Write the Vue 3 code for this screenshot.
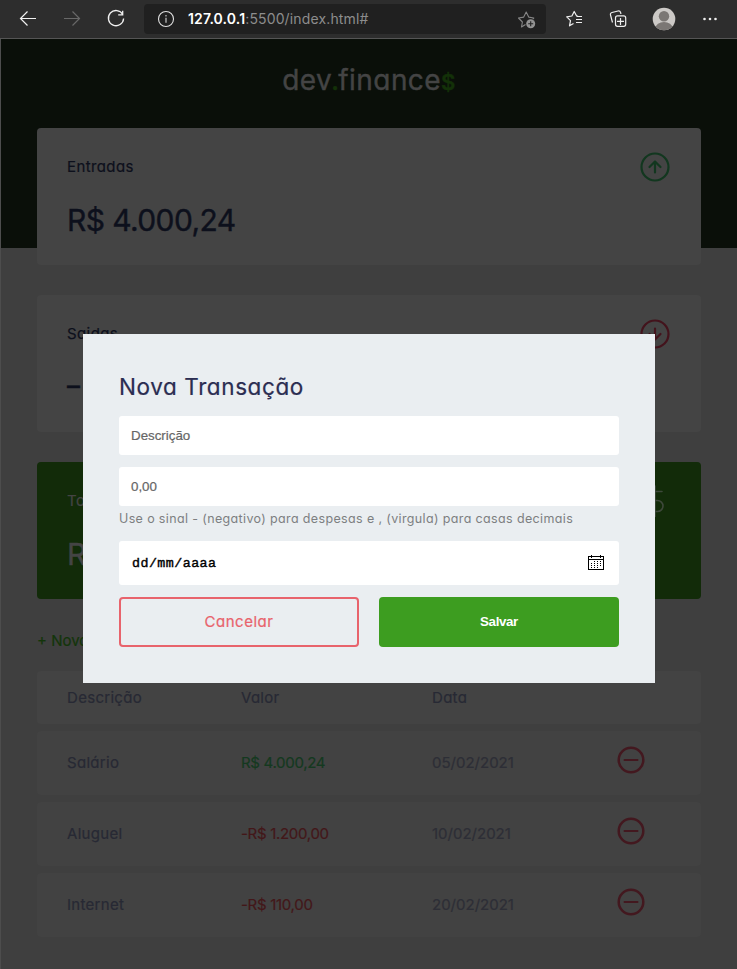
<script setup>
const rows = [
  { name: 'Salário', value: 'R$ 4.000,24', date: '05/02/2021', kind: 'income' },
  { name: 'Aluguel', value: '-R$ 1.200,00', date: '10/02/2021', kind: 'expense' },
  { name: 'Internet', value: '-R$ 110,00', date: '20/02/2021', kind: 'expense' },
]
</script>

<template>
  <div class="window">
    <nav class="toolbar">
      <svg class="nav-icons" width="144" height="38" viewBox="0 0 144 38" fill="none">
        <path d="M36 18.5H20.5M27.5 11.5l-7 7 7 7" stroke="#f0f0f0" stroke-width="1.2" />
        <path d="M64 18.5h15.5M72.500 11.500l7 7-7 7" stroke="#686868" stroke-width="1.200" />
        <path d="M122.700 14.500A7.600 7.600 0 1 0 123.600 18.500M122.700 10.800v4h-4.500" stroke="#f0f0f0" stroke-width="1.300" />
      </svg>
      <div class="address">
        <svg width="18" height="18" viewBox="0 0 18 18" fill="none">
          <circle cx="9" cy="9" r="7.500" stroke="#e0e0e0" stroke-width="1.100" />
          <path d="M9 7.800v5M9 5v1.500" stroke="#b0b0b0" stroke-width="1.400" />
        </svg>
        <span class="url"><b>127.0.0.1</b><span>:5500/index.html#</span></span>
        <svg class="fav" width="20" height="20" viewBox="0 0 20 20" fill="none">
          <path d="M8.500 15.500l-4 2.500.9-5L1.500 9l5.200-.9L9.200 3l2.500 5.100 5.100.9-1 1" stroke="#858585" stroke-width="1.100" stroke-linejoin="round" />
          <circle cx="13.700" cy="14.700" r="4.500" fill="#929292" />
          <path d="M13.700 12.200v5M11.200 14.700h5" stroke="#222" stroke-width="1.100" />
        </svg>
      </div>
      <svg class="tools" width="191" height="38" viewBox="546 0 191 38" fill="none">
        <path d="M578 16.300l-1.500-.5-2.300-4.300-2.300 4.500-5.200.9 3.800 3.700-1 5.200 4-2.300M576.500 16.500h5.500M576 19.500h6M576 22.500h6" stroke="#eee" stroke-width="1.200" stroke-linejoin="round" />
        <path d="M612.500 22.500l-2-7.500q-.5-2 1.500-2.500l6-1.500q2-.4 2.600 1.500l.3 1.500" stroke="#eee" stroke-width="1.200" />
        <rect x="615.500" y="15.900" width="10.200" height="10.400" rx="2" stroke="#eee" stroke-width="1.200" />
        <path d="M620.500 17.900v7M617 21.400h7" stroke="#eee" stroke-width="1.200" />
        <clipPath id="avatar"><circle cx="664" cy="19" r="11.300" /></clipPath>
        <g clip-path="url(#avatar)">
          <path d="M652 7h24v24h-24z" fill="#ccc9c6" />
          <circle cx="664" cy="16.300" r="5.200" fill="#7b7774" />
          <ellipse cx="664" cy="28" rx="8.500" ry="6" fill="#7b7774" />
        </g>
        <g fill="#eee"><circle cx="704.500" cy="19" r="1.300" /><circle cx="710" cy="19" r="1.300" /><circle cx="715.500" cy="19" r="1.300" /></g>
      </svg>
    </nav>

    <div class="page">
      <header class="hero"><h1 class="logo">dev<i>.</i>finance<em>$</em></h1></header>
      <main class="content">
        <section class="card">
          <div class="card-head">
            <span class="label">Entradas</span>
            <svg width="30" height="30" viewBox="0 0 30 30" fill="none" stroke="#12371f" stroke-width="2.200" stroke-linecap="round" stroke-linejoin="round">
              <circle cx="15" cy="15" r="13.500" /><path d="M15 20.500V9.500M9.500 15L15 9.500l5.500 5.500" />
            </svg>
          </div>
          <p class="amount">R$ 4.000,24</p>
        </section>
        <section class="card">
          <div class="card-head">
            <span class="label">Saidas</span>
            <svg width="30" height="30" viewBox="0 0 30 30" fill="none" stroke="#43131c" stroke-width="2.200" stroke-linecap="round" stroke-linejoin="round">
              <circle cx="15" cy="15" r="13.500" /><path d="M15 9.500v11M9.500 15l5.500 5.500 5.500-5.500" />
            </svg>
          </div>
          <p class="amount minus">–</p>
        </section>
        <section class="card total">
          <div class="card-head">
            <span class="label">Total</span>
            <svg width="24" height="32" viewBox="0 0 24 32" fill="none" stroke="#3e483b" stroke-width="1.600" stroke-linecap="round">
              <path d="M13 1v30.500M20 6.500H9a4.500 4.500 0 0 0 0 9h6.500a5.500 5.500 0 0 1 0 11H5" />
            </svg>
          </div>
          <p class="amount">R$</p>
        </section>
        <a class="new">+ Nova</a>
        <section class="table">
          <div class="row head"><span>Descrição</span><span>Valor</span><span>Data</span></div>
          <div v-for="row in rows" :key="row.name" class="row">
            <span>{{ row.name }}</span>
            <span :class="row.kind">{{ row.value }}</span>
            <span class="date">{{ row.date }}</span>
            <svg width="28" height="28" viewBox="0 0 28 28" fill="none" stroke="#43181f">
              <circle cx="14" cy="14" r="12.300" stroke-width="2.500" /><path d="M7.500 14h13" stroke-width="2" stroke-linecap="round" />
            </svg>
          </div>
        </section>
      </main>
    </div>

    <form class="modal" @submit.prevent>
      <h2>Nova Transação</h2>
      <div class="field">Descrição</div>
      <div class="field">0,00</div>
      <small>Use o sinal - (negativo) para despesas e , (virgula) para casas decimais</small>
      <div class="field day">
        <span>dd/mm/aaaa</span>
        <svg width="16" height="15" viewBox="0 0 16 15" shape-rendering="crispEdges">
          <path d="M.5 1.500h15v13H.5zM0 4.500h16M3.500 0v3M12.500 0v3" fill="none" stroke="#000" />
          <path d="M6.500 6v8M9.500 6v8M12.500 6v6M3.500 8v6" stroke="#000" stroke-dasharray="1 1" />
        </svg>
      </div>
      <div class="actions">
        <button class="cancel" type="button">Cancelar</button>
        <button class="save">Salvar</button>
      </div>
    </form>
  </div>
</template>

<style>
body { margin: 0; background: #3f3f3f; }
</style>

<style scoped>
* { box-sizing: border-box; }
.window { position: relative; height: 969px; width: 737px; overflow: hidden; font-family: Inter, "Open Sans", sans-serif; font-size: 15px; }
.page, .modal { font-feature-settings: "cv11"; }
.page, h2, .cancel { -webkit-text-stroke: .2px currentColor; }
.toolbar { height: 39px; display: flex; background: #2d2d2d; border-bottom: 1px solid #555; }
.address { width: 402px; height: 30px; margin-top: 4px; background: #202020; border-radius: 4px; display: flex; align-items: center; padding: 0 9px 0 13px; }
.url { margin: -1px 0 0 13px; font-size: 14px; color: #8d8d8d; white-space: nowrap; letter-spacing: .14px; }
.url b { color: #fff; font-weight: 600; }
.fav { margin-left: auto; }
.page { height: 930px; background: #3f3f3f; border-left: 1px solid #4d4d4d; }
.hero { height: 209px; background: #0a0f09; text-align: center; padding-top: 21px; }
.logo { margin: 0; font-size: 28px; line-height: 40px; font-weight: 400; color: #444; letter-spacing: .45px; -webkit-text-stroke: .4px currentColor; }
.logo i, .logo em { font-style: normal; color: #133108; font-weight: 600; }
.logo i { font-size: 24px; margin: 0 -1px; }
.logo em { font-size: 22px; }
.content { margin: -120px 36px 0; display: flex; flex-direction: column; gap: 30px; }
.card { height: 137px; background: #444; border-radius: 4px; padding: 24px 31px 0 30px; color: #0d101c; }
.card-head { height: 30px; display: flex; justify-content: space-between; align-items: center; }
.label { letter-spacing: .4px; margin-top: -2px; }
.amount { margin: 16px 0 0; font-size: 30px; line-height: 45px; letter-spacing: -.6px; -webkit-text-stroke: .4px currentColor; }
.minus { margin-top: 14px; transform: scaleX(.86); transform-origin: 0 50%; width: 30px; }
.total { background: #122b09; color: #444; }
.total svg { margin-right: 4px; }
.new { height: 22px; line-height: 24px; color: #13350a; }
.table { margin-top: -10px; display: flex; flex-direction: column; gap: 7px; }
.row { height: 64px; border-radius: 4px; background: #424242; display: grid; grid-template-columns: 174px 191px 185px 1fr; align-items: center; padding: 0 30px 2px; color: #272934; letter-spacing: .3px; }
.row.head { height: 53px; background: #434343; padding-bottom: 0; }
.row svg { margin-top: -5px; }
.income { color: #14391f; letter-spacing: -.3px; }
.expense { color: #431719; letter-spacing: -.3px; }
.date { color: #2d2e36; letter-spacing: 0; }
.modal { position: absolute; left: 83px; top: 334px; width: 572px; height: 349px; background: #eaeef1; padding: 36px; display: flex; flex-direction: column; }
.modal h2 { margin: 0 0 12px; height: 34px; line-height: 34px; font-size: 22.500px; font-weight: 400; color: #2b2d51; letter-spacing: .6px; }
.field { height: 39px; margin-bottom: 12px; background: #fff; border-radius: 3px; padding: 0 12px; display: flex; align-items: center; font: 13.333px "Liberation Sans", sans-serif; color: #666; flex: none; -webkit-text-stroke: .2px #666; }
small { font-size: 12.500px; line-height: 18px; height: 18px; margin: -8px 0 13px; color: #7d7f81; white-space: nowrap; letter-spacing: .36px; }
.field.day { height: 44px; justify-content: space-between; padding: 0 15px 0 13px; font: 13.333px "Liberation Mono", monospace; color: #000; letter-spacing: .45px; -webkit-text-stroke: .4px #000; }
.field.day svg { margin-top: -2px; }
.actions { display: grid; grid-template-columns: 1fr 1fr; gap: 20px; }
button { height: 50px; border-radius: 4px; padding: 0 0 2px; border: 0; }
.cancel { background: transparent; border: 2px solid #e8636c; color: #e8636c; font: 15px Inter, sans-serif; font-feature-settings: "cv11"; letter-spacing: .5px; }
.save { background: #3d9d20; color: #fff; font: bold 13.333px "Liberation Sans", sans-serif; letter-spacing: -.35px; }
</style>
